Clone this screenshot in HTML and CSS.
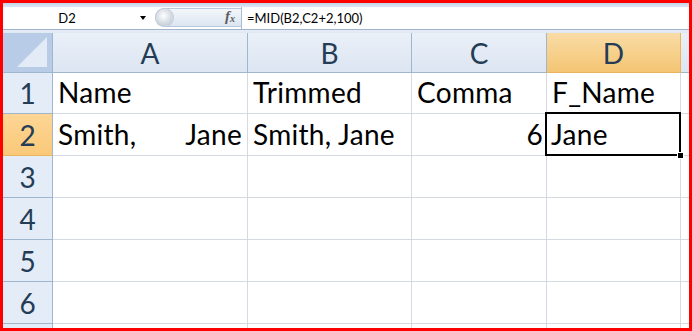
FILE: index.html
```html
<!DOCTYPE html>
<html lang="en">

<head>
    <meta charset="UTF-8">
    <title>MID formula</title>
    <link rel="stylesheet" href="styles.css">
</head>

<body>

    <div class="window">
        <div class="ribbon-edge"></div>

        <div class="formula-bar">
            <div class="name-box">D2</div>
            <div class="name-arrow"></div>
            <div class="fx-pill">
                <span class="knob"></span>
                <span class="fx"><i>f</i><sub>x</sub></span>
            </div>
            <div class="formula">=MID(B2,C2+2,100)</div>
        </div>
        <div class="bar-gap"></div>

        <div class="sheet">
            <!-- column headers -->
            <div class="corner">
                <svg width="30" height="30" viewBox="0 0 30 30"><polygon points="0,30 30,0 30,30" fill="#e3ebf6"/></svg>
            </div>
            <div class="col-head">A</div>
            <div class="col-head">B</div>
            <div class="col-head">C</div>
            <div class="col-head active">D</div>
            <div class="col-head"></div>

            <!-- row 1 -->
            <div class="row-head">1</div>
            <div class="cell">Name</div>
            <div class="cell">Trimmed</div>
            <div class="cell">Comma</div>
            <div class="cell">F_Name</div>
            <div class="cell"></div>

            <!-- row 2 -->
            <div class="row-head active">2</div>
            <div class="cell spread"><span>Smith,</span><span>Jane</span></div>
            <div class="cell">Smith, Jane</div>
            <div class="cell num">6</div>
            <div class="cell selected">Jane</div>
            <div class="cell"></div>

            <div class="row-head">3</div>
            <div class="cell"></div><div class="cell"></div><div class="cell"></div><div class="cell"></div><div class="cell"></div>

            <div class="row-head">4</div>
            <div class="cell"></div><div class="cell"></div><div class="cell"></div><div class="cell"></div><div class="cell"></div>

            <div class="row-head">5</div>
            <div class="cell"></div><div class="cell"></div><div class="cell"></div><div class="cell"></div><div class="cell"></div>

            <div class="row-head">6</div>
            <div class="cell"></div><div class="cell"></div><div class="cell"></div><div class="cell"></div><div class="cell"></div>

            <!-- row 7 is only a sliver at the bottom edge -->
            <div class="row-head"></div>
            <div class="cell"></div><div class="cell"></div><div class="cell"></div><div class="cell"></div><div class="cell"></div>
        </div>
    </div>

</body>

</html>
```

FILE: styles.css
```css
body {
    margin: 0;
    background-color: #fff;
    font-family: Lato, "Open Sans", sans-serif;
}

.window {
    width: 692px;
    height: 331px;
    box-sizing: border-box;
    border: 3px solid #ff0000;
    overflow: hidden;
    background-color: #fff;
}

.ribbon-edge {
    height: 4px;
    background: linear-gradient(#c2d4ea, #dde7f4);
}

/* formula bar */

.formula-bar {
    display: flex;
    height: 22px;
    border-bottom: 1px solid #9fb3cd;
    background-color: #fff;
    font-size: 13px;
    color: #000;
}

.name-box {
    width: 128px;
    line-height: 22px;
    text-align: center;
}

.name-arrow {
    width: 24px;
    display: flex;
    align-items: center;
    justify-content: center;
}

.name-arrow::before {
    content: "";
    border-left: 3px solid transparent;
    border-right: 3px solid transparent;
    border-top: 4px solid #000;
}

.fx-pill {
    width: 86px;
    height: 19px;
    margin-top: 1px;
    box-sizing: border-box;
    display: flex;
    align-items: center;
    justify-content: space-between;
    border: 1px solid #b9c8dc;
    border-right: none;
    border-radius: 10px 0 0 10px;
    background: linear-gradient(#f4f7fb, #dbe5f1);
}

.knob {
    width: 17px;
    height: 17px;
    border-radius: 50%;
    background: radial-gradient(circle at 45% 40%, #fff 0, #e7ebf0 30%, #b3bdc9 100%);
    box-shadow: 0 0 0 1px #c3cdda;
}

.fx {
    padding-right: 6px;
    font-family: "Liberation Serif", serif;
    font-size: 15px;
    font-style: italic;
    font-weight: bold;
    color: #5c5c5c;
    line-height: 17px;
}

.fx sub {
    font-size: 10px;
    vertical-align: -1px;
}

.formula {
    flex: 1;
    border-left: 1px solid #a9bcd6;
    padding-left: 5px;
    line-height: 22px;
}

.bar-gap {
    height: 3px;
    background: linear-gradient(#e8eef6, #dfe7f2);
}

/* grid */

.sheet {
    display: grid;
    grid-template-columns: 50px 195px 164px 135px 134px 1fr;
    grid-template-rows: 40px 41px 42px 42px 42px 42px 42px 42px;
    height: 295px;
    overflow: hidden;
    font-size: 28px;
}

.corner,
.col-head,
.row-head {
    box-sizing: border-box;
    border-right: 1px solid #9eb6ce;
    border-bottom: 1px solid #9eb6ce;
    color: #243c55;
}

.corner {
    display: flex;
    align-items: flex-end;
    justify-content: flex-end;
    padding: 0 5px 5px 0;
    background-color: #b8cce8;
}

.col-head {
    display: flex;
    align-items: center;
    justify-content: center;
    background: linear-gradient(#eaf0f8, #dce5f2);
}

.col-head.active {
    background: linear-gradient(#f9dca6, #f4c573);
    border-color: #e8b45c;
}

.row-head {
    display: flex;
    align-items: center;
    justify-content: center;
    background-color: #e4ecf7;
}

.row-head.active {
    background: linear-gradient(#fdd595, #f9c978);
    border-bottom-color: #e8b45c;
}

.cell {
    box-sizing: border-box;
    display: flex;
    align-items: flex-end;
    padding: 0 4px 7px 5px;
    border-right: 1px solid #d4d9e4;
    border-bottom: 1px solid #d4d9e4;
    line-height: 28px;
    letter-spacing: 0.3px;
    color: #000;
    white-space: nowrap;
}

.cell.spread {
    justify-content: space-between;
    padding-right: 5px;
}

.cell.num {
    justify-content: flex-end;
    padding-right: 3px;
}

.cell.selected {
    position: relative;
    padding-left: 4px;
}

.cell.selected::after {
    content: "";
    position: absolute;
    top: -2px;
    left: -2px;
    right: -1px;
    bottom: -1px;
    border: 2px solid #000;
}

.cell.selected::before {
    content: "";
    position: absolute;
    right: -3px;
    bottom: -3px;
    width: 5px;
    height: 5px;
    background-color: #000;
    box-shadow: 0 0 0 1px #fff;
    z-index: 1;
}
```
